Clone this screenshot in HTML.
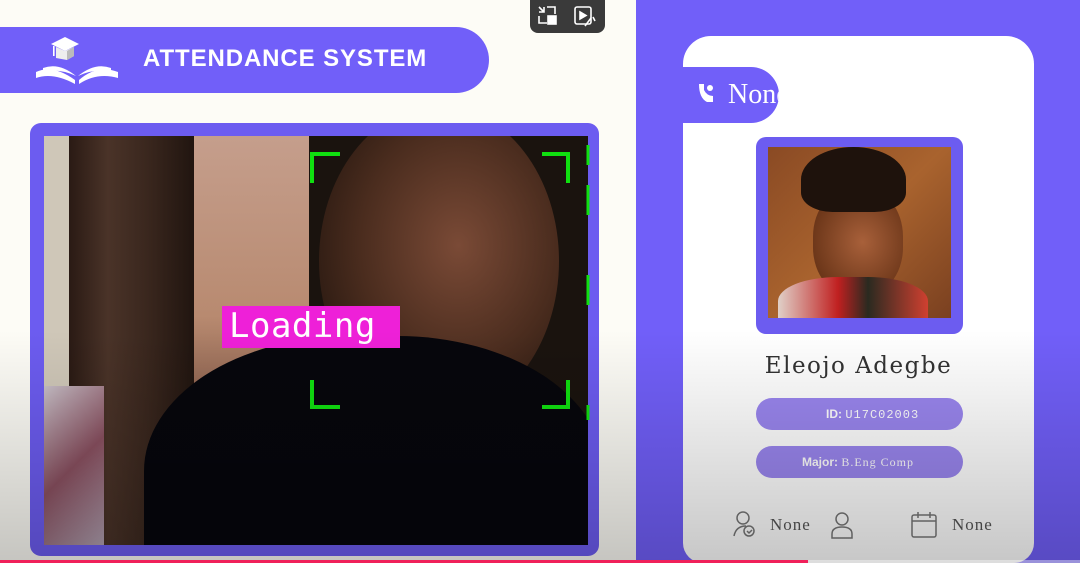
<!DOCTYPE html>
<html><head><meta charset="utf-8"><style>
*{margin:0;padding:0;box-sizing:border-box}
body{width:1080px;height:563px;overflow:hidden;background:#fdfcf6;position:relative;font-family:"Liberation Sans",sans-serif}
.abs{position:absolute}
</style></head><body>
<div class="abs" style="left:0;top:27px;width:489px;height:66px;background:#715ff9;border-radius:0 33px 33px 0"></div>
<svg class="abs" style="left:33px;top:34px" width="90" height="52" viewBox="0 0 90 52">
<path d="M18 10 L32 3 L46 10 L32 17Z" fill="#fff"/>
<path d="M23 13 L23 24 L34 26 L41 22 L41 13 L32 17Z" fill="#eee"/>
<path d="M34 17 L41 13 L41 22 L34 26Z" fill="#bbb"/>
<rect x="20" y="12" width="1.6" height="10" fill="#fff"/>
<path d="M3 38 Q20 30 42 46 L42 50 Q20 38 3 44Z" fill="#fff"/>
<path d="M85 38 Q64 30 46 46 L46 50 Q64 38 85 44Z" fill="#fff"/>
<path d="M10 34 Q26 28 43 42 Q26 34 10 38Z" fill="#fff"/>
<path d="M78 34 Q62 28 45 42 Q62 34 78 38Z" fill="#fff"/>
</svg>
<div class="abs" style="left:143px;top:45px;color:#fff;font-weight:bold;font-size:24px;letter-spacing:0.9px">ATTENDANCE SYSTEM</div>
<div class="abs" style="left:530px;top:0;width:75px;height:33px;background:#3a3a3a;border-radius:0 0 8px 8px"></div>
<svg class="abs" style="left:537px;top:4px" width="62" height="24" viewBox="0 0 62 24" fill="none" stroke="#fff" stroke-width="1.6">
<path d="M2 3 L7 8 M2 8 L7 8 L7 3"/><path d="M10 3 H18 V10"/><path d="M2 12 V19 H10"/><rect x="11" y="12" width="8" height="8" fill="#fff"/>
<rect x="38" y="3" width="16" height="17" rx="2"/><path d="M43 8 L49 11.5 L43 15Z" fill="#fff"/><path d="M54 14 L48 22 M56 13 L58 17"/>
</svg>
<div class="abs" style="left:30px;top:123px;width:569px;height:433px;background:#6c5cf0;border-radius:11px"></div>
<div class="abs" style="left:44px;top:136px;width:544px;height:409px;overflow:hidden;background:#0c0a10">
  <div class="abs" style="left:0;top:0;width:30px;height:260px;background:#cfc7b8"></div>
  <div class="abs" style="left:25px;top:0;width:130px;height:409px;background:linear-gradient(90deg,#2a1a14,#4a3328 30%,#3a271e 60%,#1e130e)"></div>
  <div class="abs" style="left:150px;top:0;width:115px;height:300px;background:linear-gradient(180deg,#c59e8c,#b88a70 60%,#7a5040)"></div>
  <div class="abs" style="left:265px;top:0;width:279px;height:409px;background:#1a130e"></div>
  <div class="abs" style="left:275px;top:-30px;width:240px;height:310px;border-radius:50%;background:radial-gradient(ellipse at 58% 45%,#7a4a36,#4a2c1e 50%,#24160f 85%)"></div>
  <div class="abs" style="left:100px;top:200px;width:460px;height:300px;border-radius:45% 45% 0 0;background:#06060c"></div>
  <div class="abs" style="left:0;top:250px;width:60px;height:160px;background:linear-gradient(135deg,#c8c0c8,#8a5060 50%,#b0a0b0)"></div>
</div>
<div class="abs" style="left:222px;top:306px;width:178px;height:42px;background:#ee20d8"></div>
<div class="abs" style="left:229px;top:305px;color:#fff;font-family:'DejaVu Sans Mono',monospace;font-size:34px;line-height:42px;letter-spacing:0.5px">Loading</div>
<svg class="abs" style="left:300px;top:145px" width="300" height="275" fill="none" stroke="#10e010" stroke-width="4">
<path d="M12 38 V9 H40"/><path d="M242 9 H268 V38"/><path d="M12 235 V262 H40"/><path d="M242 262 H268 V235"/>
<path d="M288 0 V20 M288 40 V70 M288 130 V160 M288 260 V290" stroke-width="3"/>
</svg>
<div class="abs" style="left:636px;top:0;width:444px;height:563px;background:#715ff9"></div>
<div class="abs" style="left:683px;top:36px;width:351px;height:527px;background:#fff;border-radius:28px 28px 20px 20px"></div>
<div class="abs" style="left:683px;top:67px;width:96px;height:56px;background:#715ff9;border-radius:0 28px 28px 0;overflow:hidden">
<svg class="abs" style="left:14px;top:15px" width="20" height="22" viewBox="0 0 20 22" fill="#fff"><path d="M2 2 h5 v6 q3 6 9 6 v6 h-6 q-8 -4 -8 -18z"/><circle cx="13" cy="6" r="3"/></svg>
<div class="abs" style="left:45px;top:12px;color:#fff;font-family:'Liberation Serif',serif;font-size:28px">None</div></div>
<div class="abs" style="left:756px;top:137px;width:207px;height:197px;background:#6c5cf0;border-radius:10px"></div>
<div class="abs" style="left:768px;top:147px;width:183px;height:171px;overflow:hidden;background:linear-gradient(135deg,#8a4a24,#a9632e 50%,#7a4020)">
  <div class="abs" style="left:45px;top:40px;width:90px;height:110px;border-radius:45%;background:radial-gradient(ellipse at 55% 50%,#a8603a,#6a3518 75%)"></div>
  <div class="abs" style="left:33px;top:0px;width:105px;height:65px;border-radius:50% 50% 30% 30%;background:#1e120c"></div>
  <div class="abs" style="left:10px;top:130px;width:150px;height:60px;border-radius:40% 40% 0 0;background:linear-gradient(90deg,#e0d0c8,#c02020 40%,#2a2a20 60%,#d04030)"></div>
</div>
<div class="abs" style="left:683px;top:353px;width:351px;text-align:center;font-family:'DejaVu Serif','Liberation Serif',serif;font-size:23px;letter-spacing:1.5px;color:#333">Eleojo Adegbe</div>
<div class="abs" style="left:756px;top:398px;width:207px;height:32px;background:#9a86ef;border-radius:16px;color:#fff;font-size:12px;line-height:32px;padding-left:70px"><b>ID:</b> <span style="font-family:'Liberation Mono',monospace;letter-spacing:1px">U17C02003</span></div>
<div class="abs" style="left:756px;top:446px;width:207px;height:32px;background:#9a86ef;border-radius:16px;color:#fff;font-size:12px;line-height:32px;padding-left:46px"><b>Major:</b> <span style="font-family:'Liberation Serif',serif;letter-spacing:1px">B.Eng Comp</span></div>
<svg class="abs" style="left:732px;top:510px" width="300" height="32" fill="none" stroke="#777" stroke-width="1.5">
<circle cx="11" cy="8" r="6"/><path d="M2 26 q2 -10 12 -10"/><circle cx="17" cy="21" r="5"/><path d="M15 21 l2 2 3 -3"/>
<circle cx="110" cy="9" r="6"/><path d="M100 28 v-4 q0 -7 10 -7 q10 0 10 7 v4z"/>
<rect x="180" y="5" width="24" height="22" rx="2"/><path d="M180 11 h24 M186 2 v6 M198 2 v6"/>
</svg>
<div class="abs" style="left:770px;top:515px;font-family:'Liberation Serif',serif;font-size:17px;color:#555;letter-spacing:1px">None</div>
<div class="abs" style="left:952px;top:515px;font-family:'Liberation Serif',serif;font-size:17px;color:#555;letter-spacing:1px">None</div>
<div class="abs" style="left:0;top:330px;width:1080px;height:233px;background:linear-gradient(180deg,rgba(0,0,0,0),rgba(0,0,0,0.22))"></div>
<div class="abs" style="left:0;top:560px;width:808px;height:3px;background:#f0205a"></div>
<div class="abs" style="left:808px;top:560px;width:272px;height:3px;background:rgba(255,255,255,0.4)"></div>
</body></html>
